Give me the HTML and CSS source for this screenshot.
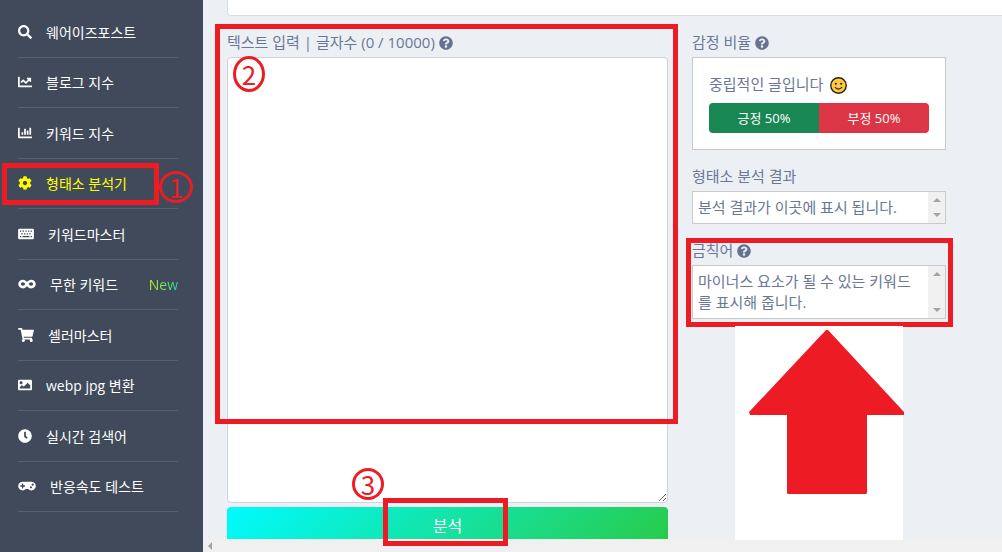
FILE: index.html
```html
<!DOCTYPE html>
<html lang="ko">
<head>
  <meta charset="UTF-8">
  <meta name="viewport" content="width=device-width, initial-scale=1.0">
  <title>형태소 분석기</title>
  <link rel="stylesheet" href="styles.css">
</head>
<body>
  <svg class="sprite" aria-hidden="true">
    <symbol id="i-help" viewBox="0 0 512 512"><path d="M504 256c0 136.997-111.043 248-248 248S8 392.997 8 256C8 119.083 119.043 8 256 8s248 111.083 248 248zM262.655 90c-54.497 0-89.255 22.957-116.549 63.758-3.536 5.286-2.353 12.415 2.715 16.258l34.699 26.31c5.205 3.947 12.621 3.008 16.665-2.122 17.864-22.658 30.113-35.797 57.303-35.797 20.429 0 45.698 13.148 45.698 32.958 0 14.976-12.363 22.667-32.534 33.976C247.128 238.528 216 254.941 216 296v4c0 6.627 5.373 12 12 12h56c6.627 0 12-5.373 12-12v-1.333c0-28.462 83.186-29.647 83.186-106.667 0-58.002-60.165-102-116.531-102zM256 338c-25.365 0-46 20.635-46 46 0 25.364 20.635 46 46 46s46-20.636 46-46c0-25.364-20.635-46-46-46z"/></symbol>
  </svg>

  <!-- 사이드바 메뉴 -->
  <nav class="sidebar">
    <ul class="menu">
      <li><a href="#"><svg class="icon" viewBox="0 0 512 512"><path d="M505 442.7L405.3 343c-4.5-4.5-10.6-7-17-7H372c27.6-35.3 44-79.7 44-128C416 93.1 322.9 0 208 0S0 93.1 0 208s93.1 208 208 208c48.3 0 92.7-16.4 128-44v16.3c0 6.4 2.5 12.5 7 17l99.7 99.7c9.4 9.4 24.6 9.4 33.9 0l28.3-28.3c9.4-9.4 9.4-24.6.1-34zM208 336c-70.7 0-128-57.2-128-128 0-70.7 57.2-128 128-128 70.7 0 128 57.2 128 128 0 70.7-57.2 128-128 128z"/></svg>웨어이즈포스트</a></li>
      <li><a href="#"><svg class="icon" viewBox="0 0 512 512"><path d="M496 384H64V80c0-8.84-7.16-16-16-16H16C7.16 64 0 71.16 0 80v336c0 17.67 14.33 32 32 32h464c8.84 0 16-7.16 16-16v-32c0-8.84-7.16-16-16-16zM464 96H345.94c-21.38 0-32.09 25.85-16.97 40.97l32.4 32.4L288 242.75l-73.37-73.37c-12.5-12.5-32.76-12.5-45.25 0l-68.69 68.69c-6.25 6.25-6.25 16.38 0 22.63l22.62 22.62c6.25 6.25 16.38 6.25 22.63 0L192 237.25l73.37 73.37c12.5 12.5 32.76 12.5 45.25 0l96-96 32.4 32.4c15.12 15.12 40.97 4.41 40.97-16.97V112c.01-8.84-7.15-16-15.99-16z"/></svg>블로그 지수</a></li>
      <li><a href="#"><svg class="icon" viewBox="0 0 512 512"><path d="M332.8 320h38.4c6.4 0 12.8-6.4 12.8-12.8V172.8c0-6.4-6.4-12.8-12.8-12.8h-38.4c-6.4 0-12.8 6.4-12.8 12.8v134.4c0 6.4 6.4 12.8 12.8 12.8zm96 0h38.4c6.4 0 12.8-6.4 12.8-12.8V76.8c0-6.4-6.4-12.8-12.8-12.8h-38.4c-6.4 0-12.8 6.4-12.8 12.8v230.4c0 6.4 6.4 12.8 12.8 12.8zm-288 0h38.4c6.4 0 12.8-6.4 12.8-12.8v-70.4c0-6.4-6.4-12.8-12.8-12.8h-38.4c-6.4 0-12.8 6.4-12.8 12.8v70.4c0 6.4 6.4 12.8 12.8 12.8zm96 0h38.4c6.4 0 12.8-6.4 12.8-12.8V108.8c0-6.4-6.4-12.8-12.8-12.8h-38.4c-6.4 0-12.8 6.4-12.8 12.8v198.4c0 6.4 6.4 12.8 12.8 12.8zM496 384H64V80c0-8.84-7.16-16-16-16H16C7.16 64 0 71.16 0 80v336c0 17.67 14.33 32 32 32h464c8.84 0 16-7.16 16-16v-32c0-8.84-7.16-16-16-16z"/></svg>키워드 지수</a></li>
      <li><a href="#" class="active"><svg class="icon" viewBox="0 0 512 512"><path d="M487.4 315.7l-42.6-24.6c4.3-23.2 4.3-47 0-70.2l42.6-24.6c4.9-2.8 7.1-8.6 5.5-14-11.1-35.6-30-67.8-54.7-94.6-3.8-4.1-10-5.1-14.8-2.3L380.8 110c-17.9-15.4-38.5-27.3-60.8-35.1V25.8c0-5.6-3.9-10.5-9.4-11.7-36.7-8.2-74.3-7.8-109.2 0-5.5 1.2-9.4 6.1-9.4 11.7V75c-22.2 7.9-42.8 19.8-60.8 35.1L88.7 85.5c-4.9-2.8-11-1.9-14.8 2.3-24.7 26.7-43.6 58.9-54.7 94.6-1.7 5.4.6 11.2 5.5 14L67.3 221c-4.3 23.2-4.3 47 0 70.2l-42.6 24.6c-4.9 2.8-7.1 8.6-5.5 14 11.1 35.6 30 67.8 54.7 94.6 3.8 4.1 10 5.1 14.8 2.3l42.6-24.6c17.9 15.4 38.5 27.3 60.8 35.1v49.2c0 5.6 3.9 10.5 9.4 11.7 36.7 8.2 74.3 7.8 109.2 0 5.5-1.2 9.4-6.1 9.4-11.7v-49.2c22.2-7.9 42.8-19.8 60.8-35.1l42.6 24.6c4.9 2.8 11 1.9 14.8-2.3 24.7-26.7 43.6-58.9 54.7-94.6 1.5-5.5-.7-11.3-5.6-14.1zM256 336c-44.1 0-80-35.9-80-80s35.9-80 80-80 80 35.9 80 80-35.9 80-80 80z"/></svg>형태소 분석기</a></li>
      <li><a href="#"><svg class="icon icon-md" viewBox="0 0 576 512"><path fill-rule="evenodd" d="M48 64h480a48 48 0 0 1 48 48v288a48 48 0 0 1-48 48H48a48 48 0 0 1-48-48V112a48 48 0 0 1 48-48zM68 128v48h48v-48zM166 128v48h48v-48zM264 128v48h48v-48zM362 128v48h48v-48zM460 128v48h48v-48zM116 226v48h48v-48zM214 226v48h48v-48zM312 226v48h48v-48zM410 226v48h48v-48zM68 330v44h48v-44zM160 330v44h256v-44zM460 330v44h48v-44z"/></svg>키워드마스터</a></li>
      <li><a href="#"><svg class="icon icon-lg" viewBox="0 0 640 512"><path d="M471.1 96C405 96 353.3 137.3 320 174.6 286.7 137.3 235 96 168.9 96 75.8 96 0 167.8 0 256s75.8 160 168.9 160c66.1 0 117.8-41.3 151.1-78.6 33.3 37.3 85 78.6 151.1 78.6 93.1 0 168.9-71.8 168.9-160S564.2 96 471.1 96zM168.9 320c-40.2 0-72.9-28.7-72.9-64s32.7-64 72.9-64c38.2 0 73.4 36.1 94 64-20.4 27.6-55.9 64-94 64zm302.2 0c-38.2 0-73.4-36.1-94-64 20.4-27.6 55.9-64 94-64 40.2 0 72.9 28.7 72.9 64s-32.7 64-72.9 64z"/></svg>무한 키워드<span class="new">New</span></a></li>
      <li><a href="#"><svg class="icon icon-md" viewBox="0 0 576 512"><path d="M528.12 301.319l47.273-208C578.806 78.301 567.391 64 551.99 64H159.208l-9.166-44.81C147.758 8.021 137.93 0 126.529 0H24C10.745 0 0 10.745 0 24v16c0 13.255 10.745 24 24 24h69.883l70.248 343.435C147.325 417.1 136 435.222 136 456c0 30.928 25.072 56 56 56s56-25.072 56-56c0-15.674-6.447-29.835-16.824-40h209.647C430.447 426.165 424 440.326 424 456c0 30.928 25.072 56 56 56s56-25.072 56-56c0-22.172-12.888-41.332-31.579-50.405l5.517-24.276c3.413-15.018-8.002-29.319-23.403-29.319H218.117l-6.545-32h293.145c11.206 0 20.92-7.754 23.403-18.681z"/></svg>셀러마스터</a></li>
      <li><a href="#"><svg class="icon" viewBox="0 0 512 512"><path d="M464 448H48c-26.51 0-48-21.49-48-48V112c0-26.51 21.49-48 48-48h416c26.51 0 48 21.49 48 48v288c0 26.51-21.49 48-48 48zM112 120c-30.928 0-56 25.072-56 56s25.072 56 56 56 56-25.072 56-56-25.072-56-56-56zM64 384h384V272l-87.515-87.515c-4.686-4.686-12.284-4.686-16.971 0L208 320l-55.515-55.515c-4.686-4.686-12.284-4.686-16.971 0L64 336v48z"/></svg>webp jpg 변환</a></li>
      <li><a href="#"><svg class="icon" viewBox="0 0 512 512"><path d="M256,8C119,8,8,119,8,256S119,504,256,504,504,393,504,256,393,8,256,8Zm92.49,313h0l-20,25a16,16,0,0,1-22.49,2.5h0l-67-49.72a40,40,0,0,1-15-31.23V112a16,16,0,0,1,16-16h32a16,16,0,0,1,16,16V256l58,42.5A16,16,0,0,1,348.49,321Z"/></svg>실시간 검색어</a></li>
      <li><a href="#"><svg class="icon icon-lg" viewBox="0 0 640 512"><path d="M480.07 96H160a160 160 0 1 0 114.24 272h91.5A160 160 0 1 0 480.07 96zM248 268a12 12 0 0 1-12 12h-52v52a12 12 0 0 1-12 12h-24a12 12 0 0 1-12-12v-52H84a12 12 0 0 1-12-12v-24a12 12 0 0 1 12-12h52v-52a12 12 0 0 1 12-12h24a12 12 0 0 1 12 12v52h52a12 12 0 0 1 12 12zm216 76a40 40 0 1 1 40-40 40 40 0 0 1-40 40zm64-96a40 40 0 1 1 40-40 40 40 0 0 1-40 40z"/></svg>반응속도 테스트</a></li>
    </ul>
  </nav>

  <div class="page">
    <main class="content">
      <div class="top-card"></div>
      <div class="columns">
        <!-- 텍스트 입력 -->
        <form class="editor">
          <label class="title" for="text">텍스트 입력 | 글자수 (0 / 10000) <svg class="help"><use href="#i-help"/></svg></label>
          <textarea id="text" rows="18"></textarea>
          <button type="button" class="analyze">분석</button>
        </form>

        <!-- 분석 결과 -->
        <div class="results">
          <h2 class="title">감정 비율 <svg class="help"><use href="#i-help"/></svg></h2>
          <div class="mood">
            <p>중립적인 글입니다
              <svg class="face" viewBox="0 0 16 16">
                <circle cx="8" cy="8" r="7.3" fill="#ffc83d" stroke="#222" stroke-width="1.3"/>
                <circle cx="5.5" cy="6.3" r="1" fill="#222"/>
                <circle cx="10.5" cy="6.3" r="1" fill="#222"/>
                <path d="M4.6 9.6q3.4 3.4 6.8 0" fill="none" stroke="#222" stroke-width="1.1"/>
              </svg>
            </p>
            <div class="ratio">
              <div class="good" style="width: 50%">긍정 50%</div>
              <div class="bad" style="width: 50%">부정 50%</div>
            </div>
          </div>

          <h2 class="title">형태소 분석 결과</h2>
          <div class="box">
            <p>분석 결과가 이곳에 표시 됩니다.</p>
            <div class="vscroll"><i class="up"></i><i class="down"></i></div>
          </div>

          <h2 class="title">금칙어 <svg class="help"><use href="#i-help"/></svg></h2>
          <div class="box">
            <p>마이너스 요소가 될 수 있는 키워드를 표시해 줍니다.</p>
            <div class="vscroll"><i class="up"></i><i class="down"></i></div>
          </div>
        </div>
      </div>
    </main>
    <div class="hscroll"><i class="left"></i></div>
  </div>

  <!-- 사용 순서 표시 -->
  <div class="mark mark-menu"></div>
  <div class="mark mark-text"></div>
  <div class="mark mark-banned"></div>
  <div class="mark mark-button"></div>
  <div class="num num-1">1</div>
  <div class="num num-2">2</div>
  <div class="num num-3">3</div>
  <svg class="arrow" viewBox="0 0 170 214">
    <path d="M0 0h168v214H0z" fill="#fff"/>
    <path d="M91 4h2l76 82v3h-37v78l-1 1H53l-1-1V89H15l-1-3z" fill="#ed1c24"/>
  </svg>
</body>
</html>
```

FILE: styles.css
```css
* { box-sizing: border-box; }
body {
  display: flex;
  position: relative;
  height: 100vh;
  margin: 0;
  overflow: hidden;
  background: #ecf0f5;
  color: #6b7794;
  font-family: "Open Sans", "Noto Sans CJK KR", sans-serif;
  font-size: 15px;
}
.sprite { position: absolute; width: 0; height: 0; }

/* 사이드바 */
.sidebar {
  display: flex;
  flex: none;
  width: 203px;
  padding: 7px 25px 40px 18px;
  background: #404a5b;
}
.menu {
  display: flex;
  flex: 1;
  flex-direction: column;
  margin: 0;
  padding: 0;
  list-style: none;
}
.menu li {
  display: flex;
  flex: 1;
  border-bottom: 1px solid #566071;
}
.menu a {
  display: flex;
  flex: 1;
  align-items: center;
  color: #fff;
  font-size: 14px;
  text-decoration: none;
  white-space: nowrap;
}
.menu a.active { color: #ff0; }
.icon {
  width: 14px;
  height: 14px;
  margin-right: 14px;
  fill: currentColor;
}
.icon-md { width: 16px; }
.icon-lg { width: 18px; }
.new {
  margin-left: auto;
  background: linear-gradient(90deg, #c6f626, #24d89a);
  -webkit-background-clip: text;
  background-clip: text;
  color: transparent;
}

/* 본문 */
.page {
  display: flex;
  flex: 1;
  flex-direction: column;
  min-width: 0;
}
.content {
  flex: 1;
  min-height: 0;
  padding-left: 24px;
  overflow: hidden;
}
.top-card {
  height: 16px;
  margin-bottom: 15px;
  border: 1px solid #d9dce1;
  border-width: 0 0 1px 1px;
  border-radius: 0 0 0 4px;
  background: #fff;
}
.columns {
  display: grid;
  grid-template-columns: 441fr 254fr;
  gap: 24px;
  padding-right: 56px;
}
.title {
  display: block;
  margin: 0 0 4px;
  font-size: 15px;
  font-weight: 400;
  line-height: 22px;
}
.help {
  width: 14px;
  height: 14px;
  vertical-align: -2px;
  fill: #66728f;
}
.editor textarea {
  display: block;
  width: 100%;
  padding: 6px 12px;
  border: 1px solid #ced4da;
  border-radius: 4px;
  background: #fff;
  color: inherit;
  font: inherit;
  line-height: 24px;
}
.analyze {
  width: 100%;
  height: 36px;
  margin-top: 4px;
  border: 0;
  border-radius: 4px;
  background: linear-gradient(135deg, #00fbff, #28cb4a);
  color: #fff;
  font-family: inherit;
  font-size: 16px;
}

/* 결과 */
.results p { margin: 0; }
.mood {
  margin-bottom: 15px;
  padding: 16px;
  border: 1px solid #c8cacc;
  background: #fff;
}
.results .mood p {
  margin-bottom: 8px;
  line-height: 21px;
}
.face {
  width: 17px;
  height: 17px;
  margin-left: 3px;
  vertical-align: -4px;
}
.ratio {
  display: flex;
  height: 30px;
  border-radius: 4px;
  overflow: hidden;
  color: #fff;
  font-size: 13px;
  line-height: 30px;
  text-align: center;
}
.good { background: #198754; }
.bad { background: #dc3545; }
.box {
  display: flex;
  margin-bottom: 15px;
  border: 1px solid #c8cacc;
  background: #fff;
}
.box p {
  flex: 1;
  padding: 5px;
  line-height: 21px;
}

/* 스크롤바 */
.vscroll {
  display: flex;
  flex-direction: column;
  align-items: center;
  justify-content: space-between;
  width: 17px;
  padding: 6px 0;
  background: #f0f0f0;
}
.up, .down {
  border: 4px solid transparent;
}
.up { border-top: 0; border-bottom-color: #a3a3a3; }
.down { border-bottom: 0; border-top-color: #a3a3a3; }
.hscroll {
  display: flex;
  align-items: center;
  height: 13px;
  padding-left: 5px;
  background: #f0f0f0;
}
.left {
  border: 4px solid transparent;
  border-left: 0;
  border-right-color: #a3a3a3;
}

/* 빨간 표시 */
.mark {
  position: absolute;
  border: 5px solid #ed1c24;
}
.mark-menu { left: 2px; top: 163px; width: 157px; height: 42px; }
.mark-text { left: 215px; top: 24px; width: 463px; height: 400px; }
.mark-banned { left: 686px; top: 238px; width: 267px; height: 89px; }
.mark-button { left: 383px; top: 498px; width: 125px; height: 48px; }
.num {
  display: flex;
  position: absolute;
  align-items: center;
  justify-content: center;
  width: 32px;
  height: 32px;
  border: 3px solid #ed1c24;
  border-radius: 50%;
  color: #ed1c24;
  font-family: "Noto Sans CJK KR", sans-serif;
  font-size: 26px;
  line-height: 24px;
}
.num-1 { left: 159px; top: 171px; width: 34px; }
.num-2 { left: 233px; top: 56px; height: 36px; }
.num-3 { left: 352px; top: 468px; }
.arrow {
  position: absolute;
  left: 735px;
  top: 326px;
  width: 170px;
  height: 214px;
}
```
